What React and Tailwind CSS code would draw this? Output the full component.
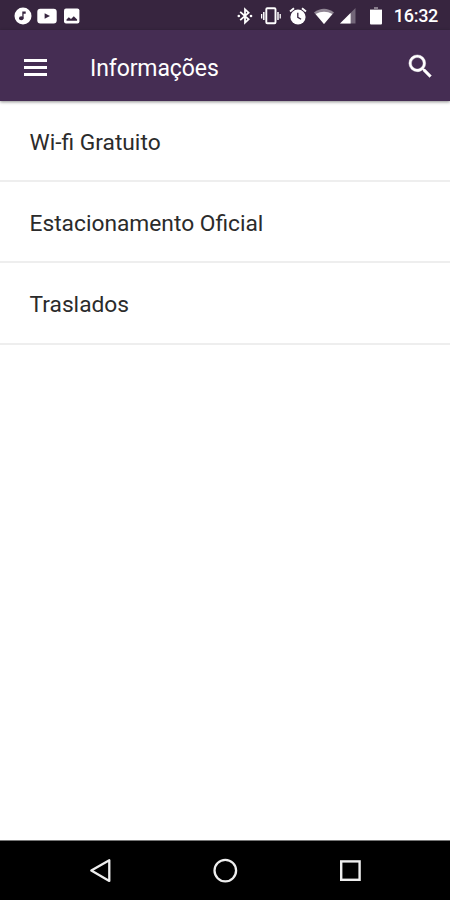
const items = ['Wi-fi Gratuito', 'Estacionamento Oficial', 'Traslados'];

function StatusBar() {
  return (
    <div className="flex h-[30px] items-center bg-[#37253f] pl-[14px] pr-3 pt-px text-white">
      <svg className="h-[18px] w-[18px] shrink-0" viewBox="0 0 18 18">
        <circle cx="9" cy="9" r="8.5" fill="#fff" />
        <ellipse cx="7.3" cy="11.2" rx="2.3" ry="2" fill="#37253f" />
        <path d="M8.3 11V4.6h3.4v2.2H9.6V11z" fill="#37253f" />
      </svg>
      <svg className="ml-[5px] h-4 w-5 shrink-0" viewBox="0 0 20 16">
        <rect x="0.3" y="0.8" width="19.4" height="14.6" rx="3" fill="#fff" />
        <path d="M7.6 5.2v5.6l5.4-2.8z" fill="#37253f" />
      </svg>
      <svg className="ml-[7px] h-4 w-4 shrink-0" viewBox="0 0 16 16">
        <rect x="0" y="0.5" width="15.4" height="15" rx="2" fill="#fff" />
        <path d="M2.5 12.8v-1.4l2.3-2.2 2.2 1.9 2.8-2.8 3.3 3.3v1.2z" fill="#37253f" />
      </svg>
      <svg className="ml-[156px] h-[18px] w-[18px] shrink-0" viewBox="0 0 18 18" fill="none" stroke="#fff" strokeWidth="1.8">
        <path d="M4.2 4.8 12.6 12.3 9 15.7V2.3l3.6 3.4-8.4 7.5" />
        <circle cx="2.8" cy="9" r="1.3" fill="#fff" stroke="none" />
        <circle cx="15" cy="9" r="1.3" fill="#fff" stroke="none" />
      </svg>
      <svg className="ml-[7px] h-[18px] w-5 shrink-0" viewBox="0 0 20 18" fill="none" stroke="#fff">
        <rect x="5.3" y="1.3" width="9.2" height="15" rx="1" strokeWidth="1.9" />
        <path d="M2.8 5v8M17 5v8" strokeWidth="1.5" />
        <path d="M.6 7v4.5M19.2 7v4.5" strokeWidth="1.3" />
      </svg>
      <svg className="ml-2 h-[18px] w-[18px] shrink-0" viewBox="0 0 18 18" fill="none">
        <circle cx="9" cy="10" r="7.6" fill="#fff" />
        <path d="M1 4.6 5 1.3M17 4.6l-4-3.3" stroke="#fff" strokeWidth="1.9" />
        <path d="M8.8 5.8v4.5l3.3 2" stroke="#37253f" strokeWidth="1.3" />
      </svg>
      <svg className="ml-[7px] h-4 w-5 shrink-0" viewBox="0 0 20 16">
        <path d="M0 4.5Q10-3 20 4.5L10 16z" fill="#fff" fillOpacity="0.45" />
        <path d="M1.6 5.9Q10 1.8 18.4 5.9L10 16z" fill="#fff" />
      </svg>
      <svg className="ml-[6px] h-4 w-4 shrink-0" viewBox="0 0 16 16">
        <path d="M15.5 0v15.5H0z" fill="#fff" fillOpacity="0.3" />
        <path d="M10.6 4.9v10.6H0z" fill="#fff" />
      </svg>
      <svg className="ml-[14px] h-[18px] w-3 shrink-0" viewBox="0 0 12 18">
        <path d="M4 0h4v2h4v2H0V2h4z" fill="#fff" fillOpacity="0.4" />
        <path d="M0 3h12v13.5q0 1-1 1H1q-1 0-1-1z" fill="#fff" />
      </svg>
      <span className="ml-auto pt-px text-[18px] font-medium leading-none tracking-[-0.3px]">16:32</span>
    </div>
  );
}

function AppBar() {
  return (
    <header className="relative flex h-[71px] items-center bg-[#452d53] pl-6 pr-[14px] pt-[2px] text-white shadow-[0_1px_3px_rgba(0,0,0,0.45)]">
      <button aria-label="Menu" className="flex w-[23px] flex-col gap-[4px] pt-px">
        <span className="h-[3px] bg-white" />
        <span className="h-[3px] bg-white" />
        <span className="h-[3px] bg-white" />
      </button>
      <h1 className="ml-[43px] pt-[5px] text-[23px] leading-7 tracking-[-0.1px]">Informações</h1>
      <button aria-label="Buscar" className="ml-auto">
        <svg className="h-[31px] w-[31px]" viewBox="0 0 24 24" fill="#fff" stroke="#fff" strokeWidth="0.3">
          <path d="M15.5 14h-.79l-.28-.27A6.47 6.47 0 0 0 16 9.5 6.5 6.5 0 1 0 9.5 16c1.61 0 3.09-.59 4.23-1.57l.27.28v.79l5 4.99L20.49 19zm-6 0C7.01 14 5 11.99 5 9.5S7.01 5 9.5 5 14 7.01 14 9.5 11.99 14 9.5 14" />
        </svg>
      </button>
    </header>
  );
}

export default function App() {
  return (
    <div className="flex h-[900px] w-[450px] flex-col overflow-hidden bg-white font-[Roboto,sans-serif]">
      <StatusBar />
      <AppBar />
      <main className="flex-1">
        <ul>
          {items.map((item) => (
            <li key={item} className="flex h-[81px] items-center border-b-2 border-[#eeeeee] pl-[29.5px] pt-[6px] text-[22.75px] text-[#2b2b2b] last:h-[82px] last:pt-[4px]">
              {item}
            </li>
          ))}
        </ul>
      </main>
      <nav className="flex h-[60px] items-center border-t border-[#777] bg-black px-[88px]">
        <svg className="h-[26px] w-6" viewBox="0 0 24 26" fill="none" stroke="#eee" strokeWidth="2.3" strokeLinejoin="round">
          <path d="M3.3 12.6 21.3 2.3v20.6z" />
        </svg>
        <svg className="mx-auto h-[26px] w-[26px]" viewBox="0 0 26 26" fill="none" stroke="#eee" strokeWidth="2.3">
          <circle cx="13.3" cy="12.6" r="10.8" />
        </svg>
        <svg className="h-6 w-6" viewBox="0 0 24 24" fill="none" stroke="#eee" strokeWidth="2.4">
          <rect x="3.2" y="2.4" width="18.4" height="18.4" />
        </svg>
      </nav>
    </div>
  );
}
